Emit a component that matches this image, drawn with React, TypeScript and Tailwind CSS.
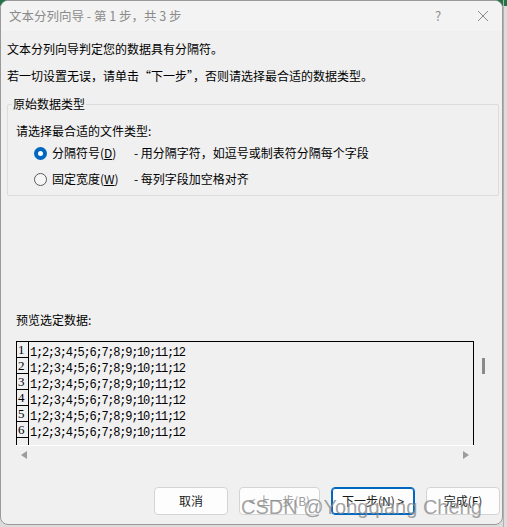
import React from 'react';

const font = { fontFamily: '"Noto Sans CJK SC", "Noto Sans", sans-serif' };

const rows = [1, 2, 3, 4, 5, 6];

function Radio({ checked }: { checked?: boolean }) {
  return checked ? (
    <span className="w-[13px] h-[13px] rounded-full bg-[#0067c0] flex items-center justify-center shrink-0">
      <span className="w-[5px] h-[5px] rounded-full bg-white" />
    </span>
  ) : (
    <span className="w-[13px] h-[13px] rounded-full border border-[#5a5a5a] bg-[#f6f6f6] shrink-0" />
  );
}

function Btn({ children, w, primary, disabled }: { children: React.ReactNode; w: string; primary?: boolean; disabled?: boolean }) {
  return (
    <div
      className={`${w} h-[28px] rounded-[4px] flex items-center justify-center text-[12px] bg-[#fdfdfd] ${
        primary ? 'border border-[#0067c0] shadow-[inset_0_0_0_1px_#0067c0]' : 'border border-[#d4d4d4]'
      } ${disabled ? 'text-[#9d9d9d]' : 'text-[#1a1a1a]'}`}
    >
      {children}
    </div>
  );
}

export default function App() {
  return (
    <div className="w-[507px] h-[527px] bg-[#dcdcdc] relative overflow-hidden" style={font}>
      <div className="h-[6px] bg-[#217346]" />
      <div className="absolute left-[503px] top-0 w-px h-full bg-[#b0b0b0]" />
      <div className="absolute left-0 top-0 w-[503px] h-[525px] rounded-[8px] border border-[#9a9a9a] bg-[#f0f0f0] overflow-hidden flex flex-col">
        {/* title bar */}
        <div className="h-[30px] bg-[#f3f3f3] flex items-center pl-[8px] text-[12.5px] text-[#8b8b8b] shrink-0">
          <span className="flex-1">文本分列向导 - 第 1 步，共 3 步</span>
          <span className="w-[12px] text-center text-[13px] text-[#8b8b8b] mr-[33px]">?</span>
          <svg width="12" height="12" viewBox="0 0 12 12" className="mr-[13px]">
            <path d="M1 1L11 11M11 1L1 11" stroke="#8b8b8b" strokeWidth="1" />
          </svg>
        </div>

        <div className="flex-1 flex flex-col px-[6px] text-[12px] text-black">
          <p className="mt-[9px] h-[18px] leading-[18px]">文本分列向导判定您的数据具有分隔符。</p>
          <p className="mt-[9px] h-[18px] leading-[18px]">若一切设置无误，请单击“下一步”，否则请选择最合适的数据类型。</p>

          <fieldset className="mt-[10px] w-[492px] border border-[#dcdcdc] pl-[8px] pb-[7px] rounded-[2px]">
            <legend className="-ml-[4px] px-px leading-[18px]">原始数据类型</legend>
            <p className="mt-[9px] leading-[18px]">请选择最合适的文件类型:</p>
            <div className="mt-[4px] flex items-center h-[18px] pl-[18px]">
              <Radio checked />
              <span className="ml-[5px] w-[82px]">
                分隔符号(<span className="underline">D</span>)
              </span>
              <span>- 用分隔字符，如逗号或制表符分隔每个字段</span>
            </div>
            <div className="mt-[8px] flex items-center h-[18px] pl-[18px]">
              <Radio />
              <span className="ml-[5px] w-[82px]">
                固定宽度(<span className="underline">W</span>)
              </span>
              <span>- 每列字段加空格对齐</span>
            </div>
          </fieldset>

          <p className="mt-[115px] ml-[9px] leading-[18px]">预览选定数据:</p>

          <div className="mt-[12px] ml-[9px] flex">
            <div className="w-[458px]">
              <div className="h-[104px] border-l border-t border-r border-black overflow-hidden flex">
                <div className="w-[12px] border-r border-black shrink-0">
                  {[...rows, 7].map((n) => (
                    <div
                      key={n}
                      className="h-[16px] border-b border-black flex items-end text-[13px] leading-[14px] pl-px"
                      style={{ fontFamily: '"Liberation Serif", serif' }}
                    >
                      {n <= 6 ? n : ''}
                    </div>
                  ))}
                </div>
                <div className="pl-px pt-[3px]">
                  {rows.map((n) => (
                    <div
                      key={n}
                      className="h-[16px] flex items-center text-[12px] tracking-[-1.25px] text-black"
                      style={{ fontFamily: '"Liberation Mono", monospace' }}
                    >
                      1;2;3;4;5;6;7;8;9;10;11;12
                    </div>
                  ))}
                </div>
              </div>
              <div className="h-px bg-white" />
              <div className="h-[18px] flex items-center justify-between px-[5px]">
                <svg width="6" height="8" viewBox="0 0 6 8">
                  <path d="M6 0V8L0 4Z" fill="#9c9c9c" />
                </svg>
                <svg width="6" height="8" viewBox="0 0 6 8">
                  <path d="M0 0V8L6 4Z" fill="#9c9c9c" />
                </svg>
              </div>
            </div>
            <div className="ml-[8px] mt-[17px] w-[3px] h-[16px] bg-[#8a8a8a]" />
          </div>

          <div className="mt-auto mb-[9px] flex justify-end gap-[11px] -mr-[4px]">
            <Btn w="w-[74px]">取消</Btn>
            <Btn w="w-[81px]" disabled>
              &lt; 上一步(B)
            </Btn>
            <Btn w="w-[84px]" primary>
              下一步(N) &gt;
            </Btn>
            <Btn w="w-[74px]">完成(F)</Btn>
          </div>
        </div>
      </div>

      <div
        className="absolute left-[241px] top-[494px] text-[20px] leading-[26px] text-[#8a8a8a]/80 whitespace-nowrap pointer-events-none"
        style={{ fontFamily: '"Liberation Sans", Arial, sans-serif' }}
      >
        CSDN @Yongqiang Cheng
      </div>
    </div>
  );
}
